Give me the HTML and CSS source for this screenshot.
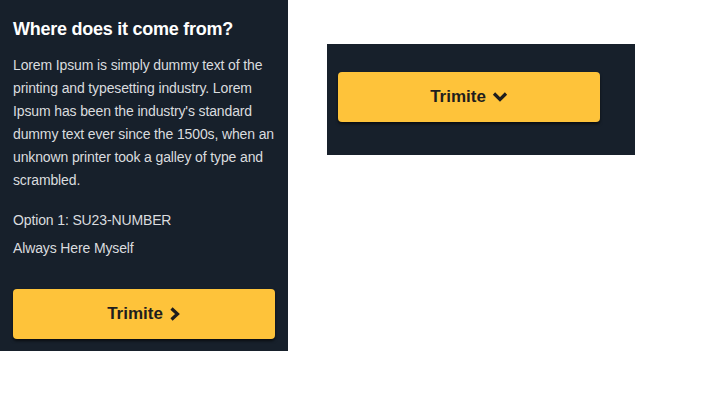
FILE: index.html
```html
<!DOCTYPE html>
<html>
<head>
<meta charset="utf-8">
<link rel="stylesheet" href="styles.css">
</head>
<body>
<div class="page">
  <section class="card">
    <h2 class="card-title">Where does it come from?</h2>
    <p class="card-text">Lorem Ipsum is simply dummy text of the printing and typesetting industry. Lorem Ipsum has been the industry's standard dummy text ever since the 1500s, when an unknown printer took a galley of type and scrambled.</p>
    <div class="options">
      <div class="option">Option 1: SU23-NUMBER</div>
      <div class="option">Always Here Myself</div>
    </div>
    <button class="btn">Trimite
      <svg class="icon" width="12" height="16" viewBox="0 0 12 16"><polyline points="2.5,2.5 8.5,8 2.5,13.5" fill="none" stroke="currentColor" stroke-width="3.2" stroke-linecap="butt" stroke-linejoin="miter"/></svg>
    </button>
  </section>
  <section class="box">
    <button class="btn">Trimite
      <svg class="icon" width="16" height="12" viewBox="0 0 16 12"><polyline points="2,2.5 8,8.5 14,2.5" fill="none" stroke="currentColor" stroke-width="3.2" stroke-linecap="butt" stroke-linejoin="miter"/></svg>
    </button>
  </section>
</div>
</body>
</html>
```
FILE: styles.css
```css
html, body {
  margin: 0;
  padding: 0;
  background: #ffffff;
}
body {
  font-family: "Liberation Sans", Arial, sans-serif;
}
.page {
  display: flex;
  align-items: flex-start;
}
.card {
  box-sizing: border-box;
  width: 288px;
  height: 351px;
  background: #17202b;
  padding: 18px 13px 12px 13px;
  display: flex;
  flex-direction: column;
}
.card-title {
  margin: 0;
  font-size: 18px;
  line-height: 22px;
  font-weight: bold;
  letter-spacing: -0.25px;
  color: #ffffff;
}
.card-text {
  margin: 14px 0 0 0;
  font-size: 14px;
  line-height: 23px;
  letter-spacing: -0.13px;
  color: #dadcdf;
}
.options {
  margin-top: 14px;
}
.option {
  font-size: 14px;
  line-height: 28px;
  letter-spacing: -0.13px;
  color: #dadcdf;
}
.btn {
  box-sizing: border-box;
  width: 262px;
  height: 50px;
  border: none;
  border-radius: 4px;
  background: #fec33a;
  box-shadow: 0 2px 3px rgba(0, 0, 0, 0.6);
  color: #1e1e1e;
  font-family: "Liberation Sans", Arial, sans-serif;
  font-size: 17px;
  font-weight: bold;
  display: flex;
  align-items: center;
  justify-content: center;
  gap: 6px;
  padding: 0;
  cursor: pointer;
}
.card .btn {
  margin-top: 27px;
}
.icon {
  display: block;
}
.box {
  box-sizing: border-box;
  width: 308px;
  height: 111px;
  margin-left: 39px;
  margin-top: 44px;
  background: #17202b;
  padding: 28px 11px;
}
```
